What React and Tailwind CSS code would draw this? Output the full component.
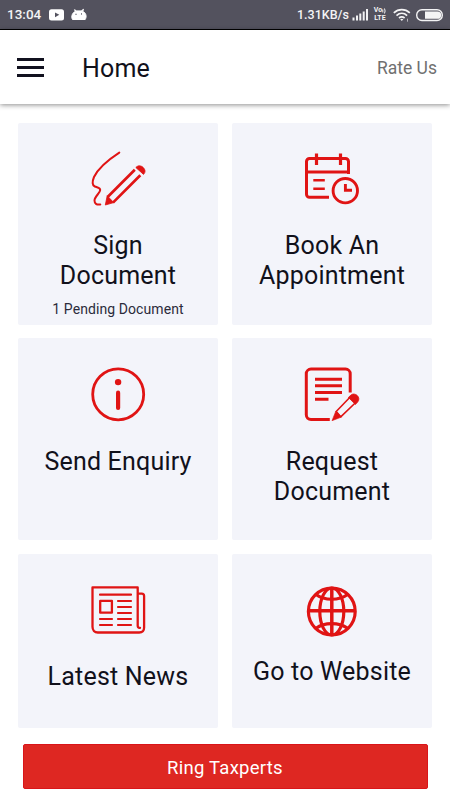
import React from 'react';

const RED = '#e01414';

function IconFrame({ children, viewBox = '0 0 76 70' }) {
  return (
    <svg
      className="h-[70px] w-[76px] shrink-0"
      viewBox={viewBox}
      fill="none"
      stroke={RED}
      strokeWidth="2.8"
      strokeLinejoin="round"
    >
      {children}
    </svg>
  );
}

function SignIcon() {
  return (
    <IconFrame viewBox="0 -1 76 70">
      <path d="M39.3 7.6C31 13 19 21.5 14 32c-2 4.8-1.800 8.500.8 9.500 3 1.200 5.400 1 5.400 3.500 0 3-5.700 6.500-5.700 10.500 0 3 2 4.500 5.800 4" strokeWidth="2" strokeLinecap="round" />
      <path d="M54.800 24.800 27.600 52M60.300 30.300 33 57.600" strokeWidth="2.700" />
      <path d="m27.200 50.800 6.600 6.800-8.500 2.400z" fill={RED} strokeWidth="0.800" />
      <path d="M55.800 22.500c2.500-2.600 5.600-1.900 7.500.1 2 2.100 2.500 4.600.2 6.800z" fill={RED} strokeWidth="0.800" />
    </IconFrame>
  );
}

function AppointmentIcon() {
  return (
    <IconFrame viewBox="-1 -1 76 70">
      <path d="M34 52.300H14.500a3 3 0 0 1-3-3V16.500a3 3 0 0 1 3-3h36a3 3 0 0 1 3 3V29M11.500 27h42" strokeWidth="3" />
      <path d="M21.500 8.500V20M45.500 8.500V20" strokeWidth="3.200" />
      <path d="M18.300 35.300h11.500M18.300 43.700h11.500" strokeWidth="2.600" />
      <circle cx="50.300" cy="45.700" r="12.200" strokeWidth="2.900" />
      <path d="M50.400 39v6.300H57" strokeWidth="2.900" strokeLinejoin="miter" />
    </IconFrame>
  );
}

function InfoIcon() {
  return (
    <IconFrame>
      <circle cx="38.200" cy="34.300" r="25.500" />
      <circle cx="38.100" cy="22.100" r="3.200" fill={RED} stroke="none" />
      <path d="M38.100 32.700v15.200" strokeWidth="4.200" strokeLinecap="round" />
    </IconFrame>
  );
}

function RequestIcon() {
  return (
    <IconFrame viewBox="-1 0 76 70">
      <path d="M34.800 59.500H16a4.700 4.700 0 0 1-4.700-4.700V13.800A4.700 4.700 0 0 1 16 9.100h34.500a4.700 4.700 0 0 1 4.700 4.700V32.500" strokeWidth="3" />
      <path d="M20 19.300h27M20 25.800h27M20 32.500h27M20 39.300h13.500" strokeWidth="3" />
      <path d="m41.200 51.500 14-14.500 5.500 5.500-15 14.300z" strokeWidth="1.600" />
      <path d="m40.800 51.200 5.700 5.900-9.500 3.600z" fill={RED} strokeWidth="0.600" />
      <path d="m53.400 37.400 2.600-2.400c2.200-1.800 4.900-.8 6.500.8 1.500 1.600 2 4.100.2 6.200l-2.300 2.500z" fill={RED} strokeWidth="0.800" />
    </IconFrame>
  );
}

function NewsIcon() {
  return (
    <IconFrame>
      <path d="M60 52.800c-1.800.3-2.300-.8-2.300-2.300V12.400H12.500v39.400c0 3.300 2 5.700 5.300 5.700h41.400c3 0 4.900-2 4.900-5V21c0-1.600-.8-2.400-2.400-2.400h-4" strokeWidth="2.300" strokeLinecap="round" />
      <rect x="20.200" y="25.900" width="11.700" height="11.800" strokeWidth="2.300" />
      <path d="M20 19.700h31M38 26h13M38 32h13M38 38h13M20 44h12M38 44h13M20 50h12M38 50h13" strokeWidth="2.200" strokeLinecap="round" />
    </IconFrame>
  );
}

function GlobeIcon() {
  return (
    <IconFrame viewBox="-1 0 76 70">
      <circle cx="36.800" cy="36.500" r="23.400" strokeWidth="3.200" />
      <path d="M36.800 13v47M13 35.800h47.500" strokeWidth="3.500" />
      <ellipse cx="36.800" cy="36.500" rx="12" ry="23.500" strokeWidth="3.200" />
      <path d="M21 19.500c8.500 6.300 23 6.300 31.600 0M21 53.300c8.500-6.300 23-6.300 31.600 0" strokeWidth="3.200" />
    </IconFrame>
  );
}

function StatusBar() {
  return (
    <div className="flex h-[30px] shrink-0 items-center border-b border-black bg-[#53525e] px-[7px] text-[#f4f4f5]">
      <span className="w-[41px] text-[13.500px] font-medium leading-[29px]">13:04</span>
      <svg className="h-[29px] w-[40px]" viewBox="48 0 40 29">
        <rect x="49" y="9.300" width="15" height="11.200" rx="2.500" fill="#fff" />
        <path d="m55 12.400 4.300 2.400-4.300 2.400z" fill="#53525e" />
        <path d="M72.500 19.500c-1.800-3 .2-7.500 3-8l-1-1.800 2.200 1.200h4.500l2.300-1.600-.8 2.200c3.300 1 4.300 5 2.500 8z" fill="#fff" stroke="#fff" strokeLinejoin="round" />
        <path d="M76 13.700v1.300M81.500 13.300v1.300" stroke="#53525e" />
      </svg>
      <div className="ml-auto flex items-center">
        <span className="w-[54px] whitespace-nowrap text-[12.500px] font-medium leading-[29px]">1.31KB/s</span>
        <svg className="h-[29px] w-[20px]" viewBox="351 0 20 29" stroke="#f1f1f3" strokeWidth="2">
          <path d="M353.500 20.500v-3M357 20.500v-5M360.300 20.500v-7M363.700 20.500v-9M367 20.500V9" />
        </svg>
        <div className="flex w-[18px] flex-col items-center text-[7px] font-bold leading-[7px]">
          <span className="flex h-[7px] items-center">
            Vo
            <svg className="h-[6px] w-[4px]" viewBox="0 0 4 6" fill="none" stroke="#f1f1f3">
              <path d="M.8 1.500v3M2.500.5q1.200 2.500 0 5" />
            </svg>
          </span>
          <span className="mt-px">LTE</span>
        </div>
        <svg className="h-[29px] w-[54px]" viewBox="389 0 54 29" fill="none" stroke="#f4f4f5">
          <path d="M393.800 12.900c4.600-4.300 11.400-4.300 16 0M396.500 15.600c3.200-2.900 7.500-2.900 10.600 0M399 18c1.700-1.400 3.900-1.400 5.600 0" strokeWidth="1.700" />
          <path d="m400.200 19.300 1.600 1.700 1.600-1.700q-1.600-1-3.200 0z" fill="#f4f4f5" stroke="none" />
          <path d="M407.500 18.700v3" strokeWidth="1" opacity=".6" />
          <rect x="416.700" y="9.800" width="25.600" height="10.700" rx="5.300" strokeWidth="1.400" />
          <path d="M425 11.500h12.500a3.600 3.600 0 0 1 0 7.300H425z" fill="#f4f4f5" stroke="none" />
        </svg>
      </div>
    </div>
  );
}

function Header() {
  return (
    <header className="flex h-[74px] shrink-0 items-center bg-white pl-[17px] pr-[13px] shadow-[0_1px_5px_rgba(0,0,0,0.45)]">
      <button aria-label="Menu" className="flex w-[27px] flex-col gap-[5px]">
        <span className="h-[3px] bg-[#11111f]" />
        <span className="h-[3px] bg-[#11111f]" />
        <span className="h-[3px] bg-[#11111f]" />
      </button>
      <h1 className="ml-[38px] mt-[4px] text-[25px] leading-[30px] tracking-[0.2px] text-[#11111b]">Home</h1>
      <a className="ml-auto mt-[2px] text-[17.500px] leading-[24px] text-[#707070]">Rate Us</a>
    </header>
  );
}

const tiles = [
  { icon: <SignIcon />, lines: ['Sign', 'Document'], note: '1 Pending Document' },
  { icon: <AppointmentIcon />, lines: ['Book An', 'Appointment'] },
  { icon: <InfoIcon />, lines: ['Send Enquiry'] },
  { icon: <RequestIcon />, lines: ['Request', 'Document'] },
  { icon: <NewsIcon />, lines: ['Latest News'] },
  { icon: <GlobeIcon />, lines: ['Go to Website'], raised: true },
];

function Tile({ icon, lines, note, raised }) {
  return (
    <div className="flex flex-col items-center overflow-hidden rounded-[2px] bg-[#f3f4fa] pt-[21.500px] text-[#11111b]">
      {icon}
      <div className={raised ? 'mt-[11.700px]' : 'mt-[17px]'}>
        {lines.map(line => (
          <p key={line} className="whitespace-nowrap text-center text-[25px] leading-[30px] tracking-[0.200px]">
            {line}
          </p>
        ))}
      </div>
      {note && <p className="mt-[7.500px] text-[14px] leading-[20px] tracking-[0.080px] text-[#2b2b3a]">{note}</p>}
    </div>
  );
}

export default function App() {
  return (
    <div className="flex h-[800px] w-[450px] flex-col overflow-hidden bg-white font-['Roboto',sans-serif]">
      <StatusBar />
      <Header />
      <main className="mt-[18.900px] grid grid-cols-[200px_200px] grid-rows-[202px_202px_174px] gap-x-[14px] gap-y-[13.450px] px-[18px]">
        {tiles.map(tile => (
          <Tile key={tile.lines.join(' ')} {...tile} />
        ))}
      </main>
      <button className="mx-[22.500px] mt-[16.200px] h-[45px] shrink-0 rounded-[2px] border border-[#d9151a] bg-[#de2722] pt-[4px] text-[18.500px] tracking-[0.250px] text-white">
        Ring Taxperts
      </button>
    </div>
  );
}
